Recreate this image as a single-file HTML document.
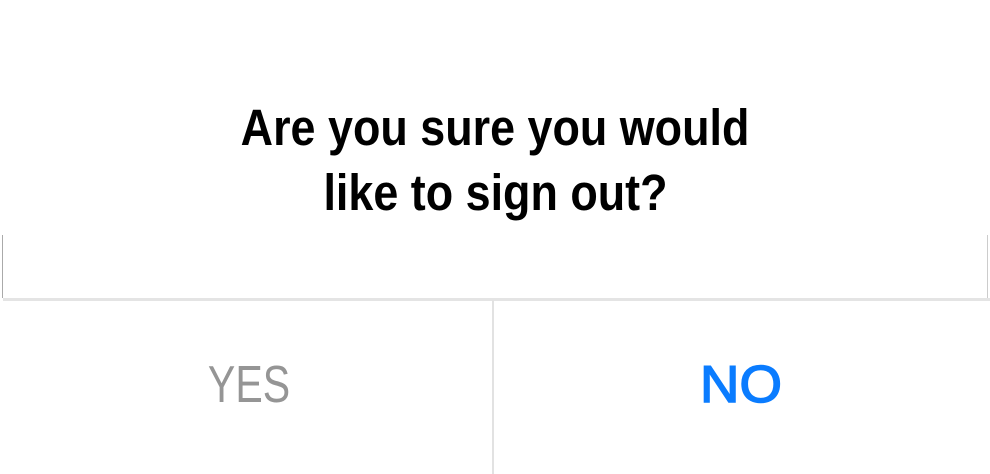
<!DOCTYPE html>
<html><head><meta charset="utf-8"><style>
html,body{margin:0;padding:0;background:#fff;width:990px;height:474px;overflow:hidden;position:relative;font-family:"Liberation Sans",sans-serif}
.t{position:absolute;left:0;width:990px;text-align:center;font-weight:bold;font-size:51px;color:#000;line-height:1}
.t span{display:inline-block;transform:scaleX(0.88);white-space:nowrap}
.b{position:absolute;top:359px;font-size:52px;line-height:1;text-align:center;width:493px}
.b span{display:inline-block;white-space:nowrap}
</style></head><body>
<div class="t" style="top:102px"><span>Are you sure you would</span></div>
<div class="t" style="top:167px"><span>like to sign out?</span></div>
<div style="position:absolute;left:2px;top:235px;width:1px;height:63px;background:#aaa"></div>
<div style="position:absolute;left:987px;top:235px;width:1px;height:63px;background:#ccc"></div>
<div style="position:absolute;left:3px;top:298px;width:987px;height:3px;background:#e4e4e4"></div>
<div style="position:absolute;left:492px;top:300px;width:2px;height:174px;background:#e2e2e2"></div>
<div class="b" style="left:3px;color:#959595"><span style="transform:scaleX(0.79)">YES</span></div>
<div class="b" style="left:494px;color:#0a7cff"><span style="transform:scaleX(1.05);-webkit-text-stroke:1.5px #0a7cff">NO</span></div>
</body></html>
